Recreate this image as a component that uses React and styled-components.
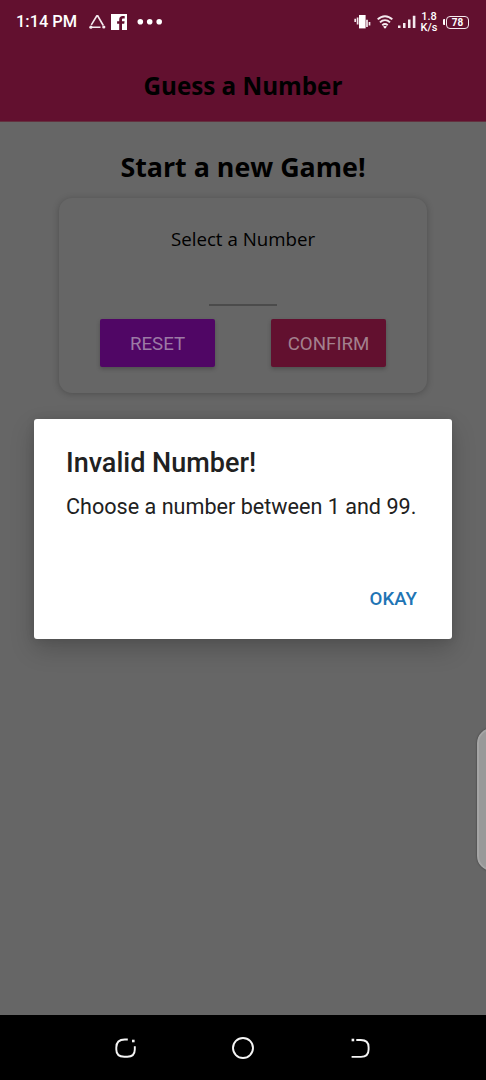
import React from "react";
import styled, { createGlobalStyle } from "styled-components";

const GlobalStyle = createGlobalStyle`
  * { box-sizing: border-box; }
  body { margin: 0; background: #666; }
`;

const Screen = styled.div`
  position: relative;
  display: flex;
  flex-direction: column;
  width: 486px;
  height: 1080px;
  overflow: hidden;
  background: #666666;
  font-family: Roboto, sans-serif;
`;

const Header = styled.header`
  height: 122px;
  flex: none;
  background: #62102f;
  border-bottom: 1px solid #64313f;
`;

const StatusBar = styled.div`
  display: flex;
  justify-content: space-between;
  height: 44px;
  padding: 0 17px 0 16px;
  color: #fff;
`;

const StatusGroup = styled.div`
  display: flex;
  align-items: center;
`;

const Clock = styled.span`
  width: 73px;
  font-size: 16.4px;
  font-weight: 500;
  line-height: 44px;
  white-space: nowrap;
`;

const Speed = styled.span`
  display: flex;
  flex-direction: column;
  align-items: center;
  width: 18px;
  margin: 0 5px 0 4px;
  font-size: 11px;
  font-weight: 500;
  line-height: 11px;
`;

const HeaderTitle = styled.h1`
  margin: 0;
  padding-top: 24px;
  color: #000;
  font: 700 24.2px/36px "Open Sans", sans-serif;
  text-align: center;
`;

const Content = styled.main`
  display: flex;
  flex: 1;
  flex-direction: column;
  align-items: center;
  padding-top: 26px;
`;

const Title = styled.h2`
  margin: 0 0 13px;
  color: #000;
  font: 700 26.8px/37px "Open Sans", sans-serif;
`;

const Card = styled.section`
  display: flex;
  flex-direction: column;
  align-items: center;
  width: 368px;
  height: 195px;
  padding: 27px 41px 0 41px;
  border-radius: 13px;
  background: #666666;
  box-shadow: 0 1px 7px rgba(0, 0, 0, 0.24);
`;

const Label = styled.label`
  color: #000;
  font: 400 18.7px/27px "Open Sans", sans-serif;
`;

const NumberField = styled.div`
  width: 68px;
  height: 54px;
  border-bottom: 2px solid #4b4b4b;
`;

const ButtonRow = styled.div`
  display: flex;
  justify-content: space-between;
  width: 286px;
  margin-top: 13px;
`;

const GameButton = styled.button`
  width: 115px;
  height: 48px;
  padding: 2px 0 0;
  border: 0;
  border-radius: 2px;
  background: ${(p) => p.$color};
  color: ${(p) => p.$text};
  font: 400 18.7px/24px Roboto, sans-serif;
  box-shadow: 0 2px 4px rgba(0, 0, 0, 0.24);
`;

const Dialog = styled.div`
  position: absolute;
  top: 419px;
  left: 34px;
  display: flex;
  flex-direction: column;
  width: 418px;
  height: 220px;
  padding: 27px 33px 0 32px;
  border-radius: 3px;
  background: #fff;
  color: #212121;
  box-shadow: 0 10px 24px rgba(0, 0, 0, 0.2), 0 0 8px rgba(0, 0, 0, 0.1);
  white-space: nowrap;
`;

const DialogTitle = styled.h3`
  margin: 0;
  font-size: 27px;
  font-weight: 500;
  line-height: 34px;
`;

const DialogText = styled.p`
  margin: 12px 0 0;
  font-size: 21.6px;
  line-height: 30px;
`;

const DialogAction = styled.button`
  align-self: flex-end;
  margin: 64px 2px 0 0;
  padding: 0;
  border: 0;
  background: none;
  color: #1f75b5;
  font: 500 18.7px/26px Roboto, sans-serif;
`;

const EdgeHandle = styled.div`
  position: absolute;
  top: 728px;
  left: 477px;
  width: 30px;
  height: 143px;
  border: 2px solid #a5a5a5;
  border-radius: 15px;
  background: #999999;
  box-shadow: 0 0 2px rgba(0, 0, 0, 0.5);
`;

const NavBar = styled.nav`
  display: flex;
  align-items: center;
  justify-content: space-between;
  flex: none;
  height: 65px;
  padding: 0 112px;
  background: #000;
`;

const NavIcon = styled.svg`
  width: 26px;
  height: 26px;
  fill: none;
  stroke: #f5f5f5;
  stroke-width: 1.9;
`;

const TriangleIcon = () => (
  <svg width="17" height="16" viewBox="0 0 17 16" fill="#f4e9ee" stroke="#f4e9ee" strokeWidth="1.6">
    <path d="M2.3 10.8 8 1.5M8.5 1.5l5.8 10M2 13.3h9.5" fill="none" />
    <circle cx="8.3" cy="1.8" r="0.9" stroke="none" />
    <circle cx="1.9" cy="13.2" r="1.6" stroke="none" />
    <circle cx="14.8" cy="13" r="1.6" stroke="none" />
  </svg>
);

const FacebookIcon = () => (
  <svg width="16" height="16" viewBox="0 0 16 16">
    <path d="M0 0h16v16H0z" fill="#fff" />
    <path d="M8.2 16V9.8H6.1V7.3h2.1V5.7c0-2.4 1.3-3.6 3.5-3.6h2v2.4h-1.3c-1 0-1.4.5-1.4 1.4v1.4h2.6l-.4 2.5H11V16z" fill="#62102f" />
  </svg>
);

const DotsIcon = () => (
  <svg width="26" height="6" viewBox="0 0 26 6" fill="#fff">
    <circle cx="3.3" cy="2.8" r="2.8" />
    <circle cx="12.7" cy="2.8" r="2.8" />
    <circle cx="22.2" cy="2.8" r="2.8" />
  </svg>
);

const VibrateIcon = () => (
  <svg width="17" height="16" viewBox="0 0 17 16" fill="none" stroke="#f4e9ee" strokeWidth="1.7">
    <path d="M5 1h6.6v13.4H5z" fill="#fff" stroke="none" />
    <path d="M3.6 3.5v7M1.2 4.8v3.2M13 5.7v7.3M15.5 8v3.4" />
  </svg>
);

const WifiIcon = () => (
  <svg width="16" height="14" viewBox="0 0 16 14" fill="none" stroke="#f4e9ee" strokeWidth="2">
    <path d="M.7 4.4c4.3-4.3 10.3-4.3 14.6 0M3 7.4c3-2.9 7-2.9 10 0M5.3 10.2c1.7-1.5 3.7-1.5 5.4 0" />
    <path d="M6 11.6c1.2-.8 2.8-.8 4 0L8 13.8z" fill="#fff" stroke="none" />
  </svg>
);

const SignalIcon = () => (
  <svg width="18" height="14" viewBox="0 0 18 14" fill="#f4e9ee">
    <path d="M0 10.5h2.5V13H0zM5 8h2.5v5H5zM10 4.5h2.5V13H10zM14.8 .8h2.6V13h-2.6z" />
  </svg>
);

const Battery = styled.span`
  display: flex;
  align-items: center;
  &::before {
    content: "";
    width: 2px;
    height: 6px;
    margin-right: 1px;
    border-radius: 1px 0 0 1px;
    background: #fff;
  }
`;

const BatteryLevel = styled.span`
  width: 23px;
  height: 13px;
  border: 1.5px solid #f4e9ee;
  border-radius: 4px;
  font-size: 10px;
  font-weight: 700;
  line-height: 11px;
  text-align: center;
`;

const Gap = styled.span`
  width: ${(p) => p.$w}px;
`;

export default function App() {
  return (
    <>
      <GlobalStyle />
      <Screen>
        <Header>
          <StatusBar>
            <StatusGroup>
              <Clock>1:14 PM</Clock>
              <TriangleIcon />
              <Gap $w={5} />
              <FacebookIcon />
              <Gap $w={10} />
              <DotsIcon />
            </StatusGroup>
            <StatusGroup>
              <VibrateIcon />
              <Gap $w={6} />
              <WifiIcon />
              <Gap $w={5} />
              <SignalIcon />
              <Speed>
                <span>1.8</span>
                <span>K/s</span>
              </Speed>
              <Battery>
                <BatteryLevel>78</BatteryLevel>
              </Battery>
            </StatusGroup>
          </StatusBar>
          <HeaderTitle>Guess a Number</HeaderTitle>
        </Header>
        <Content>
          <Title>Start a new Game!</Title>
          <Card>
            <Label>Select a Number</Label>
            <NumberField />
            <ButtonRow>
              <GameButton $color="#500665" $text="#9c7aa5">RESET</GameButton>
              <GameButton $color="#62102f" $text="#a3808e">CONFIRM</GameButton>
            </ButtonRow>
          </Card>
        </Content>
        <NavBar>
          <NavIcon viewBox="0 0 26 26">
            <path d="M15.8 4.5h-3c-5.5 0-8.5 2.5-8.5 8v2c0 5 3 7.2 8 7.2h3c5 0 7.5-2.6 7.5-7.2v-3.2" />
            <path d="M20 6h2.6" strokeWidth="2.6" />
          </NavIcon>
          <NavIcon viewBox="0 0 26 26">
            <circle cx="13" cy="13" r="10" />
          </NavIcon>
          <NavIcon viewBox="0 0 26 26">
            <path d="M8.3 5h4.5c5.5 0 7.8 2.6 7.8 7.2v2.4c0 5-2.5 7.3-7.6 7.3H3.6" />
            <path d="M3.6 5h2.6" strokeWidth="2.6" />
          </NavIcon>
        </NavBar>
        <EdgeHandle />
        <Dialog role="alertdialog">
          <DialogTitle>Invalid Number!</DialogTitle>
          <DialogText>Choose a number between 1 and 99.</DialogText>
          <DialogAction>OKAY</DialogAction>
        </Dialog>
      </Screen>
    </>
  );
}
